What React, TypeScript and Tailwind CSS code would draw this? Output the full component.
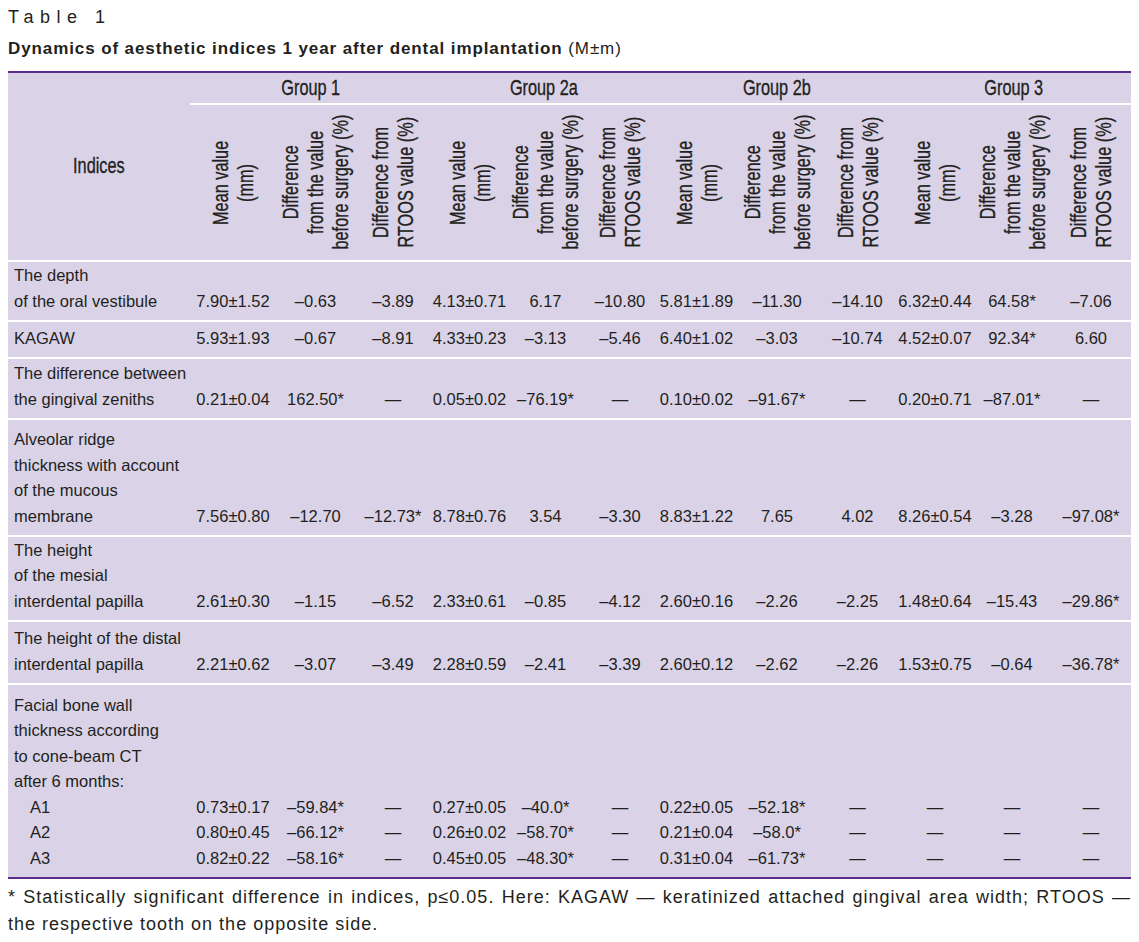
const groups = ["Group 1", "Group 2a", "Group 2b", "Group 3"];

const colClasses = [
  "w-[182px]",
  "w-[86px]",
  "w-[79px]",
  "w-[76px]",
  "w-[77px]",
  "w-[75px]",
  "w-[74px]",
  "w-[79px]",
  "w-[82px]",
  "w-[79px]",
  "w-[76px]",
  "w-[78px]",
  "w-[80px]",
];

const subHeads = [
  ["Mean value", "(mm)"],
  ["Difference", "from the value", "before surgery (%)"],
  ["Difference from", "RTOOS value (%)"],
];

type Row = {
  label: string[];
  sub?: string[];
  values: string[][];
  h: string;
};

const rows: Row[] = [
  {
    label: ["The depth", "of the oral vestibule"],
    values: [["7.90±1.52", "–0.63", "–3.89", "4.13±0.71", "6.17", "–10.80", "5.81±1.89", "–11.30", "–14.10", "6.32±0.44", "64.58*", "–7.06"]],
    h: "h-[60px]",
  },
  {
    label: ["KAGAW"],
    values: [["5.93±1.93", "–0.67", "–8.91", "4.33±0.23", "–3.13", "–5.46", "6.40±1.02", "–3.03", "–10.74", "4.52±0.07", "92.34*", "6.60"]],
    h: "h-[37px]",
  },
  {
    label: ["The difference between", "the gingival zeniths"],
    values: [["0.21±0.04", "162.50*", "—", "0.05±0.02", "–76.19*", "—", "0.10±0.02", "–91.67*", "—", "0.20±0.71", "–87.01*", "—"]],
    h: "h-[61px]",
  },
  {
    label: ["Alveolar ridge", "thickness with account", "of the mucous", "membrane"],
    values: [["7.56±0.80", "–12.70", "–12.73*", "8.78±0.76", "3.54", "–3.30", "8.83±1.22", "7.65", "4.02", "8.26±0.54", "–3.28", "–97.08*"]],
    h: "h-[117px]",
  },
  {
    label: ["The height", "of the mesial", "interdental papilla"],
    values: [["2.61±0.30", "–1.15", "–6.52", "2.33±0.61", "–0.85", "–4.12", "2.60±0.16", "–2.26", "–2.25", "1.48±0.64", "–15.43", "–29.86*"]],
    h: "h-[85px]",
  },
  {
    label: ["The height of the distal", "interdental papilla"],
    values: [["2.21±0.62", "–3.07", "–3.49", "2.28±0.59", "–2.41", "–3.39", "2.60±0.12", "–2.62", "–2.26", "1.53±0.75", "–0.64", "–36.78*"]],
    h: "h-[63px]",
  },
  {
    label: ["Facial bone wall", "thickness according", "to cone-beam CT", "after 6 months:"],
    sub: ["A1", "A2", "A3"],
    values: [
      ["0.73±0.17", "–59.84*", "—", "0.27±0.05", "–40.0*", "—", "0.22±0.05", "–52.18*", "—", "—", "—", "—"],
      ["0.80±0.45", "–66.12*", "—", "0.26±0.02", "–58.70*", "—", "0.21±0.04", "–58.0*", "—", "—", "—", "—"],
      ["0.82±0.22", "–58.16*", "—", "0.45±0.05", "–48.30*", "—", "0.31±0.04", "–61.73*", "—", "—", "—", "—"],
    ],
    h: "h-[194px]",
  },
];

// no condensed face is installed, so squeeze Liberation Sans along the text direction
function Condensed({ children }: { children: React.ReactNode }) {
  return (
    <span className="inline-block scale-x-[0.74] whitespace-nowrap text-[22px] leading-[25px] [-webkit-text-stroke:0.35px_#231f20]">
      {children}
    </span>
  );
}

function VerticalHead({ lines }: { lines: string[] }) {
  return (
    <div className="flex h-[155px] items-center justify-center">
      <div className="scale-y-[0.74]">
        <div className="rotate-180 whitespace-nowrap text-center text-[22px] leading-[25px] [-webkit-text-stroke:0.35px_#231f20] [writing-mode:vertical-rl]">
          {lines.map((l) => (
            <div key={l}>{l}</div>
          ))}
        </div>
      </div>
    </div>
  );
}

export default function App() {
  return (
    <div className="min-h-[942px] w-[1139px] bg-white font-['Liberation_Sans',Arial,sans-serif] text-[#231f20]">
      <div className="px-[8px] pt-[6px]">
        <p className="text-[18px] leading-[22px] tracking-[6.5px]">Table 1</p>
        <p className="mt-[10px] text-[17px] leading-[22px] tracking-[0.9px]">
          <span className="font-bold">Dynamics of aesthetic indices 1 year after dental implantation</span> (M±m)
        </p>

        <table className="mt-[11px] w-full table-fixed border-collapse border-y-2 border-[#5b2c8c] bg-[#dad3e8]">
          <colgroup>
            {colClasses.map((c, i) => (
              <col key={i} className={c} />
            ))}
          </colgroup>
          <thead>
            <tr className="h-[32px]">
              <th rowSpan={2} className="border-b-2 border-white text-center align-middle font-normal">
                <Condensed>Indices</Condensed>
              </th>
              {groups.map((g) => (
                <th key={g} colSpan={3} className="border-b-2 border-white text-center align-middle font-normal">
                  <Condensed>{g}</Condensed>
                </th>
              ))}
            </tr>
            <tr className="border-b-2 border-white">
              {groups.flatMap((g) =>
                subHeads.map((s, i) => (
                  <th key={g + i} className="p-0 text-center align-middle font-normal">
                    <VerticalHead lines={s} />
                  </th>
                )),
              )}
            </tr>
          </thead>
          <tbody>
            {rows.map((r, ri) => (
              <tr key={ri} className={`${r.h} ${ri < rows.length - 1 ? "border-b-2 border-white" : ""}`}>
                <td className="pb-[6px] pl-[6px] text-left align-bottom text-[16.5px] leading-[25.5px] whitespace-nowrap">
                  {r.label.map((l) => (
                    <div key={l}>{l}</div>
                  ))}
                  {r.sub?.map((l) => (
                    <div key={l} className="pl-[16px]">
                      {l}
                    </div>
                  ))}
                </td>
                {r.values[0].map((_, ci) => (
                  <td
                    key={ci}
                    className="pb-[6px] text-center align-bottom text-[16.5px] leading-[25.5px] whitespace-nowrap"
                  >
                    {r.values.map((v, vi) => (
                      <div key={vi}>{v[ci]}</div>
                    ))}
                  </td>
                ))}
              </tr>
            ))}
          </tbody>
        </table>

        <p className="mt-[5px] text-justify text-[18px] leading-[27px] tracking-[1px]">
          * Statistically significant difference in indices, p≤0.05. Here: KAGAW — keratinized attached gingival area
          width; RTOOS — the respective tooth on the opposite side.
        </p>
      </div>
    </div>
  );
}
